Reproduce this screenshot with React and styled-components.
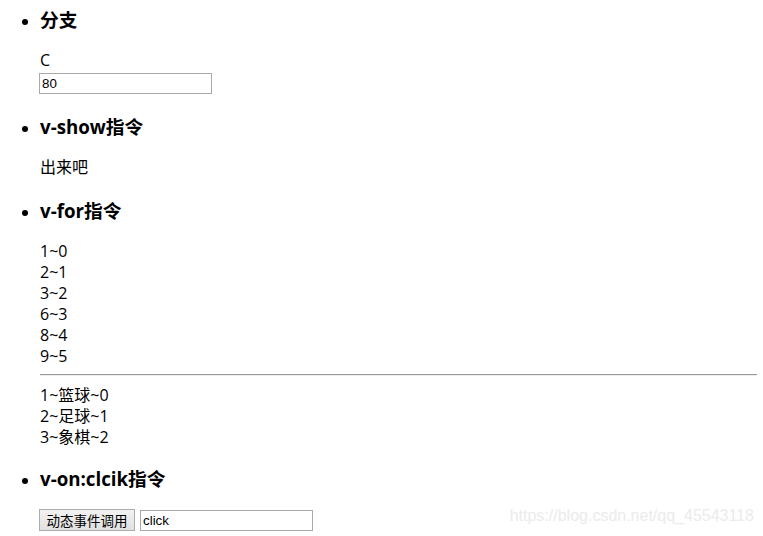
import React from "react";
import styled, { createGlobalStyle } from "styled-components";

const GlobalStyle = createGlobalStyle`
  html, body {
    margin: 0;
    padding: 0;
    background: #fff;
  }
  body {
    font-family: "Open Sans", "Noto Sans CJK SC", sans-serif;
    color: #000;
  }
`;

const Page = styled.div`
  position: relative;
  height: 536px;
  overflow: hidden;
  padding: 8px 6px 0 0;
  box-sizing: border-box;
`;

const List = styled.ul`
  margin: 0;
  padding-left: 40px;
  list-style: disc;
`;

const Item = styled.li`
  font-size: 16px;
  line-height: 24px;

  &:not(:first-child) {
    margin-top: ${(p) => p.$gap ?? 21}px;
  }
`;

const Title = styled.h3`
  margin: 0 0 18px;
  font-size: 18.72px;
  line-height: 24px;
  font-weight: 700;
`;

const Line = styled.div`
  font-size: 16px;
  line-height: 21px;
`;

const TextInput = styled.input`
  display: block;
  box-sizing: border-box;
  width: ${(p) => p.$width}px;
  height: 21px;
  margin: ${(p) => (p.$inline ? "0" : "2px 0 0 -1px")};
  padding: 1px 2px;
  border: 1px solid #a9a9a9;
  font-family: "Liberation Sans", Arial, sans-serif;
  font-size: 13.33px;
  color: #000;
  background: #fff;
  outline: none;
`;

const Rule = styled.hr`
  margin: 7px 0 9px;
  border: 0;
  border-top: 1px solid #9a9a9a;
  border-bottom: 1px solid #eeeeee;
  height: 0;
`;

const Controls = styled.div`
  display: flex;
  align-items: center;
  gap: 5px;
  margin: 2px 0 0 -1px;
`;

const Button = styled.button`
  box-sizing: border-box;
  width: 96px;
  height: 22px;
  padding: 0;
  border: 1px solid #adadad;
  background: linear-gradient(#f2f2f2, #e1e1e1);
  font-family: "Noto Sans CJK SC", sans-serif;
  font-size: 13.5px;
  line-height: 20px;
  color: #000;
`;

const Watermark = styled.div`
  position: absolute;
  right: 9px;
  top: 507px;
  font-family: "Liberation Sans", Arial, sans-serif;
  font-size: 16px;
  color: #ebebeb;
  pointer-events: none;
`;

const numbers = [1, 2, 3, 6, 8, 9];
const hobbies = ["篮球", "足球", "象棋"];

export default function App() {
  return (
    <Page>
      <GlobalStyle />
      <List>
        <Item>
          <Title>分支</Title>
          <Line>C</Line>
          <TextInput $width={173} defaultValue="80" />
        </Item>
        <Item>
          <Title>v-show指令</Title>
          <Line>出来吧</Line>
        </Item>
        <Item>
          <Title>v-for指令</Title>
          {numbers.map((n, i) => (
            <Line key={n}>
              {n}~{i}
            </Line>
          ))}
          <Rule />
          {hobbies.map((h, i) => (
            <Line key={h}>
              {i + 1}~{h}~{i}
            </Line>
          ))}
        </Item>
        <Item $gap={19}>
          <Title>v-on:clcik指令</Title>
          <Controls>
            <Button>动态事件调用</Button>
            <TextInput $inline $width={173} defaultValue="click" />
          </Controls>
        </Item>
      </List>
      <Watermark>https://blog.csdn.net/qq_45543118</Watermark>
    </Page>
  );
}
